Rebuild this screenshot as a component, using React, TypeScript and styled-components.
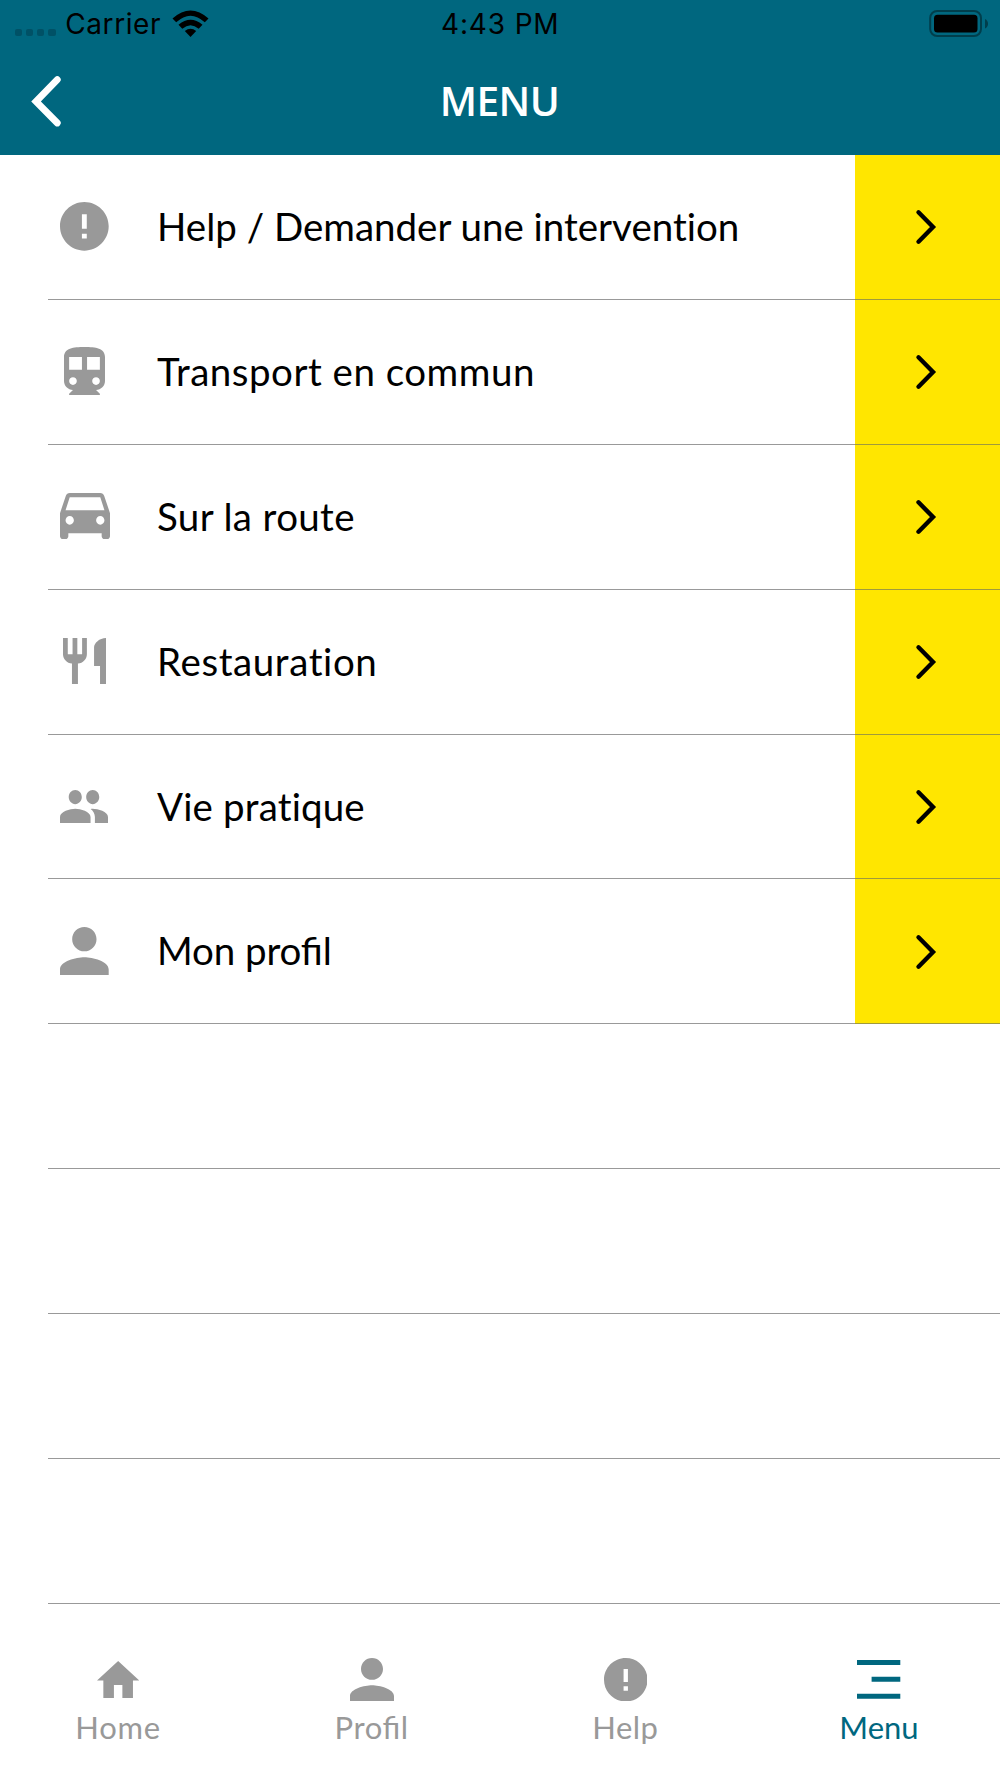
import React from "react";
import styled, { createGlobalStyle } from "styled-components";

const TEAL = "#00677f";
const YELLOW = "#ffe600";
const GREY = "#999999";

const GlobalStyle = createGlobalStyle`
  * { box-sizing: border-box; }
  body { margin: 0; background: #fff; }
`;

const Screen = styled.div`
  display: flex;
  flex-direction: column;
  width: 1000px;
  height: 1778px;
  overflow: hidden;
  background: #fff;
  color: #000;
  font-family: Lato, "Noto Sans", sans-serif;
`;

const Header = styled.header`
  flex: none;
  height: 155px;
  background: ${TEAL};
`;

const StatusBar = styled.div`
  display: grid;
  grid-template-columns: 1fr auto 1fr;
  align-items: center;
  height: 48px;
  padding: 0 12px 0 14.5px;
  font: 400 28px/48px Inter, sans-serif;
`;

const StatusLeft = styled.div`
  display: flex;
  align-items: center;
`;

const Dots = styled.div`
  display: flex;
  gap: 4px;
  padding-top: 17px;
  margin-right: 9.5px;
`;

const Dot = styled.i`
  width: 7.3px;
  height: 7.3px;
  border-radius: 2px;
  background: #005166;
`;

const Carrier = styled.span`
  width: 96px;
  margin-right: 11px;
  letter-spacing: 0.6px;
`;

const Clock = styled.span`
  margin-right: 2px;
  letter-spacing: 0.85px;
`;

const BatteryIcon = styled.svg`
  justify-self: end;
  display: block;
`;

const TitleBar = styled.div`
  display: grid;
  grid-template-columns: 1fr auto 1fr;
  align-items: center;
  height: 107px;
  padding: 0 28px 2px 27px;
`;

const BackButton = styled.button`
  justify-self: start;
  display: flex;
  padding: 0;
  border: 0;
  background: none;
`;

const Title = styled.h1`
  margin: 0;
  color: #fff;
  font: 600 40.5px/60px "Open Sans", sans-serif;
  letter-spacing: -0.5px;
`;

const List = styled.ul`
  flex: none;
  margin: 0;
  padding: 0;
  list-style: none;
`;

const Row = styled.li`
  display: flex;
  height: 144.9px;
  padding-left: 48px;
`;

const RowBody = styled.div`
  flex: 1;
  display: flex;
  align-items: center;
  border-bottom: 1px solid #999;
`;

const IconSlot = styled.span<{ $nudge?: number }>`
  display: flex;
  justify-content: center;
  width: 73px;
  padding-right: ${(p) => p.$nudge ?? 0}px;
  margin: 0 36px 1px 0;
`;

const Label = styled.span<{ $spacing: number; $indent?: number; $joined?: boolean }>`
  font-size: 38.5px;
  line-height: 56px;
  white-space: nowrap;
  letter-spacing: ${(p) => p.$spacing}px;
  margin-left: ${(p) => p.$indent ?? 0}px;
  padding-bottom: 2px;
  font-feature-settings: "liga" ${(p) => (p.$joined ? 1 : 0)};
`;

const Action = styled.span`
  display: flex;
  align-items: center;
  justify-content: center;
  width: 145px;
  padding: 1px 3px 0 0;
  background: ${YELLOW};
  border-bottom: 1px solid #a09a3c;
`;

const TabBar = styled.nav`
  flex: 1;
  display: flex;
  justify-content: space-between;
  padding: 51px 41px 0 38px;
`;

const Tab = styled.a<{ $active?: boolean }>`
  display: flex;
  flex-direction: column;
  align-items: center;
  width: 160px;
  color: ${(p) => (p.$active ? TEAL : GREY)};
`;

const TabIcon = styled.span`
  display: flex;
  align-items: center;
  justify-content: center;
  height: 49px;
`;

const TabLabel = styled.span<{ $spacing: number; $joined?: boolean }>`
  font-size: 31px;
  line-height: 46px;
  letter-spacing: ${(p) => p.$spacing}px;
  font-feature-settings: "liga" ${(p) => (p.$joined ? 1 : 0)};
`;

interface GlyphProps {
  box: string;
  width: number;
  height: number;
  d: string;
}

const Glyph = ({ box, width, height, d }: GlyphProps) => (
  <svg width={width} height={height} viewBox={box} preserveAspectRatio="none" fill="currentColor">
    <path d={d} />
  </svg>
);

const ListIcon = styled(IconSlot)`
  color: ${GREY};
`;

const icons = {
  error: {
    box: "2 2 20 20",
    d: "M12 2C6.48 2 2 6.48 2 12s4.48 10 10 10 10-4.48 10-10S17.52 2 12 2zm1 15h-2v-2h2v2zm0-4h-2V7h2v6z",
  },
  train: {
    box: "4 2 16 19",
    d: "M12 2c-4.42 0-8 .5-8 4v9.5C4 17.43 5.57 19 7.5 19L6 20.5v.5h12v-.5L16.5 19c1.93 0 3.5-1.57 3.5-3.5V6c0-3.5-3.58-4-8-4zM7.5 17c-.83 0-1.5-.67-1.5-1.5S6.67 14 7.5 14s1.5.67 1.5 1.5S8.33 17 7.5 17zm3.5-6H6V6h5v5zm5.5 6c-.83 0-1.5-.67-1.5-1.5s.67-1.5 1.5-1.5 1.5.67 1.5 1.5-.67 1.5-1.5 1.5zm1.5-6h-5V6h5v5z",
  },
  car: {
    box: "3 5 18 16",
    d: "M18.92 6.01C18.72 5.42 18.16 5 17.5 5h-11c-.66 0-1.21.42-1.42 1.01L3 12v8c0 .55.45 1 1 1h1c.55 0 1-.45 1-1v-1h12v1c0 .55.45 1 1 1h1c.55 0 1-.45 1-1v-8l-2.08-5.99zM6.5 16c-.83 0-1.5-.67-1.5-1.5S5.67 13 6.5 13s1.5.67 1.5 1.5S7.33 16 6.5 16zm11 0c-.83 0-1.5-.67-1.5-1.5s.67-1.5 1.5-1.5 1.5.67 1.5 1.5-.67 1.5-1.5 1.5zM5 11l1.5-4.5h11L19 11H5z",
  },
  restaurant: {
    box: "3 2 18 20",
    d: "M11 9H9V2H7v7H5V2H3v7c0 2.12 1.66 3.84 3.75 3.97V22h2.5v-9.03C11.34 12.84 13 11.12 13 9V2h-2v7zm5-3v8h2.5v8H21V2c-2.76 0-5 2.24-5 4z",
  },
  people: {
    box: "1 5 22 14",
    d: "M16 11c1.66 0 2.99-1.34 2.99-3S17.66 5 16 5c-1.66 0-3 1.34-3 3s1.34 3 3 3zm-8 0c1.66 0 2.99-1.34 2.99-3S9.66 5 8 5C6.34 5 5 6.34 5 8s1.34 3 3 3zm0 2c-2.33 0-7 1.17-7 3.5V19h14v-2.5c0-2.33-4.67-3.5-7-3.5zm8 0c-.29 0-.62.02-.97.05 1.16.84 1.97 1.97 1.97 3.45V19h6v-2.5c0-2.33-4.67-3.5-7-3.5z",
  },
  person: {
    box: "4 4 16 16",
    d: "M12 12c2.21 0 4-1.79 4-4s-1.79-4-4-4-4 1.79-4 4 1.79 4 4 4zm0 2c-2.67 0-8 1.34-8 4v2h16v-2c0-2.66-5.33-4-8-4z",
  },
  home: { box: "2 3 20 17", d: "M10 20v-6h4v6h5v-8h3L12 3 2 12h3v8z" },
  menu: { box: "0 0 43 39", d: "M0 0h43v5H0zM14.5 17H43v5H14.5zM0 34h43v5H0z" },
};

const entries = [
  { label: "Help / Demander une intervention", icon: icons.error, w: 48.7, h: 48.7, nudge: 0, spacing: 0, indent: 0 },
  { label: "Transport en commun", icon: icons.train, w: 41, h: 48, nudge: 0, spacing: 0.5, indent: 0 },
  { label: "Sur la route", icon: icons.car, w: 50, h: 46, nudge: 0, spacing: 0.35, indent: 0 },
  { label: "Restauration", icon: icons.restaurant, w: 43, h: 46.7, nudge: 0, spacing: 0.6, indent: 0 },
  { label: "Vie pratique", icon: icons.people, w: 48, h: 33, nudge: 2, spacing: 0.15, indent: 0 },
  { label: "Mon profil", icon: icons.person, w: 48.7, h: 48.5, nudge: 0, spacing: -0.1, indent: 0, joined: true },
];

const tabs = [
  { label: "Home", icon: icons.home, w: 42.3, h: 37, spacing: 0.7 },
  { label: "Profil", icon: icons.person, w: 44, h: 43.5, spacing: 0.6, joined: true },
  { label: "Help", icon: icons.error, w: 43.5, h: 43.5, spacing: 0.5 },
  { label: "Menu", icon: icons.menu, w: 43.3, h: 38.7, spacing: 0, active: true },
];

export default function App() {
  return (
    <Screen>
      <GlobalStyle />
      <Header>
        <StatusBar>
          <StatusLeft>
            <Dots>
              <Dot />
              <Dot />
              <Dot />
              <Dot />
            </Dots>
            <Carrier>Carrier</Carrier>
            <svg width="37" height="28" viewBox="0 0 37 28">
              <path d="M0.5 8.5Q18.5-7.5 36.5 8.500L32.800 12.300Q18.500-1 4.200 12.300Z" />
              <path d="M6.500 14.800Q18.500 4.800 30.500 14.800L26.700 18.700Q18.500 11.700 10.300 18.700Z" />
              <path d="M12.800 21Q18.500 16.700 24.200 21L18.500 26.900Z" />
            </svg>
          </StatusLeft>
          <Clock>4:43 PM</Clock>
          <BatteryIcon width="60" height="28" viewBox="0 0 60 28">
            <rect x="2.2" y="1" width="50.8" height="25" rx="7" fill="none" stroke="#003e4c" strokeWidth="2" />
            <rect x="6" y="4.700" width="43.500" height="17.800" rx="3.500" />
            <path d="M57 9c4 1.800 4 7.700 0 9.500z" fill="#003e4c" />
          </BatteryIcon>
        </StatusBar>
        <TitleBar>
          <BackButton aria-label="Back">
            <svg width="36" height="54" viewBox="0 0 36 54" fill="none" stroke="#fff" strokeWidth="6.8" strokeLinecap="round">
              <path d="M30.300 5.700L9 27.500l21.300 21.500" />
            </svg>
          </BackButton>
          <Title>MENU</Title>
        </TitleBar>
      </Header>
      <List>
        {entries.map((e) => (
          <Row key={e.label}>
            <RowBody>
              <ListIcon $nudge={e.nudge}>
                <Glyph box={e.icon.box} d={e.icon.d} width={e.w} height={e.h} />
              </ListIcon>
              <Label $spacing={e.spacing} $indent={e.indent} $joined={e.joined}>
                {e.label}
              </Label>
            </RowBody>
            <Action>
              <svg width="24" height="38" viewBox="0 0 24 38" fill="none" stroke="#000" strokeWidth="4.4" strokeLinecap="round">
                <path d="M4.500 4.300L19 19 4.500 33.700" />
              </svg>
            </Action>
          </Row>
        ))}
        {[0, 1, 2, 3].map((n) => (
          <Row key={n}>
            <RowBody />
          </Row>
        ))}
      </List>
      <TabBar>
        {tabs.map((t) => (
          <Tab key={t.label} $active={t.active}>
            <TabIcon>
              <Glyph box={t.icon.box} d={t.icon.d} width={t.w} height={t.h} />
            </TabIcon>
            <TabLabel $spacing={t.spacing} $joined={t.joined}>
              {t.label}
            </TabLabel>
          </Tab>
        ))}
      </TabBar>
    </Screen>
  );
}
